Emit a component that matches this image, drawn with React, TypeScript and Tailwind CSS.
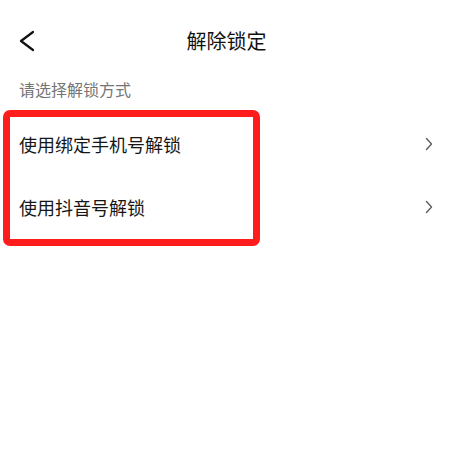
const font = { fontFamily: '"Noto Sans CJK SC", "Noto Sans", sans-serif' };

function Chevron() {
  return (
    <svg width="8" height="14" viewBox="0 0 8 14" fill="none" className="shrink-0">
      <polyline points="1.5,1.5 6.5,7 1.5,12.5" stroke="#5e5e5e" strokeWidth="1.4" strokeLinecap="round" strokeLinejoin="round" />
    </svg>
  );
}

function Row({ label }: { label: string }) {
  return (
    <div className="flex h-[63px] items-center justify-between pl-[19px] pr-[20px]">
      <span className="text-[18px] leading-[24px] text-[#161616]">{label}</span>
      <Chevron />
    </div>
  );
}

export default function App() {
  return (
    <div className="relative h-[456px] w-[453px] overflow-hidden bg-white" style={font}>
      <div className="mt-[21px] grid h-10 grid-cols-[1fr_auto_1fr] items-center">
        <div className="pl-[19px]">
          <svg width="16" height="22" viewBox="0 0 16 22" fill="none">
            <polyline points="14,2 2,11 14,20" stroke="#111" strokeWidth="2.2" strokeLinecap="round" strokeLinejoin="round" />
          </svg>
        </div>
        <h1 className="text-[20px] font-normal leading-[28px] text-[#111]">解除锁定</h1>
        <div />
      </div>

      <p className="mt-[18px] pl-[19px] text-[16px] leading-[20px] text-[#757575]">请选择解锁方式</p>

      <div className="mt-[13px]">
        <Row label="使用绑定手机号解锁" />
        <Row label="使用抖音号解锁" />
      </div>

      <div className="pointer-events-none absolute left-[3px] top-[110px] h-[136px] w-[257px] rounded-[7px] border-[7px] border-[#ff1c1c]" />
    </div>
  );
}
